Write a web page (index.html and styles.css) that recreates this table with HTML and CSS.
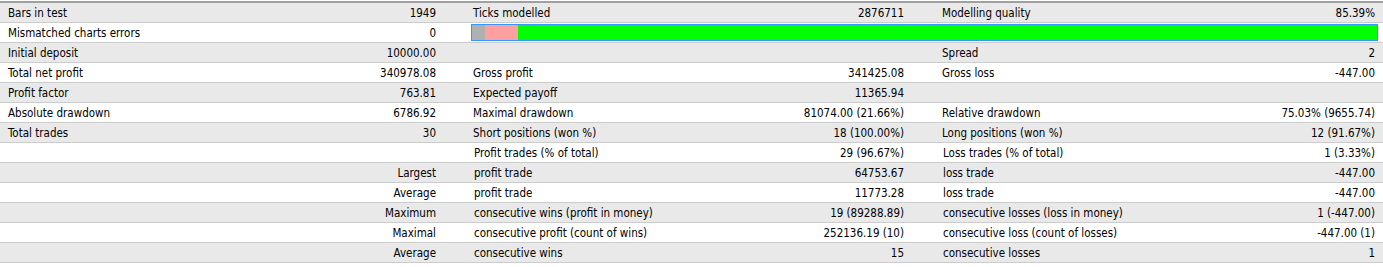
FILE: index.html
```html
<!DOCTYPE html>
<html>
<head>
<meta charset="utf-8">
<link rel="stylesheet" href="styles.css">
</head>
<body>
<div class="report">
  <div class="row alt">
    <div class="lbl">Bars in test</div><div class="val v1">1949</div>
    <div class="lbl">Ticks modelled</div><div class="val v2">2876711</div>
    <div class="lbl">Modelling quality</div><div class="val v3">85.39%</div>
  </div>
  <div class="row">
    <div class="lbl">Mismatched charts errors</div><div class="val v1">0</div>
    <div class="bar-cell">
      <div class="bar"><span class="seg seg-gray"></span><span class="seg seg-pink"></span><span class="seg seg-green"></span></div>
    </div>
  </div>
  <div class="row alt">
    <div class="lbl">Initial deposit</div><div class="val v1">10000.00</div>
    <div class="lbl"></div><div class="val v2"></div>
    <div class="lbl">Spread</div><div class="val v3">2</div>
  </div>
  <div class="row">
    <div class="lbl">Total net profit</div><div class="val v1">340978.08</div>
    <div class="lbl">Gross profit</div><div class="val v2">341425.08</div>
    <div class="lbl">Gross loss</div><div class="val v3">-447.00</div>
  </div>
  <div class="row alt">
    <div class="lbl">Profit factor</div><div class="val v1">763.81</div>
    <div class="lbl">Expected payoff</div><div class="val v2">11365.94</div>
    <div class="lbl"></div><div class="val v3"></div>
  </div>
  <div class="row">
    <div class="lbl">Absolute drawdown</div><div class="val v1">6786.92</div>
    <div class="lbl">Maximal drawdown</div><div class="val v2">81074.00 (21.66%)</div>
    <div class="lbl">Relative drawdown</div><div class="val v3">75.03% (9655.74)</div>
  </div>
  <div class="row alt">
    <div class="lbl">Total trades</div><div class="val v1">30</div>
    <div class="lbl">Short positions (won %)</div><div class="val v2">18 (100.00%)</div>
    <div class="lbl">Long positions (won %)</div><div class="val v3">12 (91.67%)</div>
  </div>
  <div class="row">
    <div class="wide"></div>
    <div class="lbl">Profit trades (% of total)</div><div class="val v2">29 (96.67%)</div>
    <div class="lbl">Loss trades (% of total)</div><div class="val v3">1 (3.33%)</div>
  </div>
  <div class="row alt">
    <div class="wide">Largest</div>
    <div class="lbl">profit trade</div><div class="val v2">64753.67</div>
    <div class="lbl">loss trade</div><div class="val v3">-447.00</div>
  </div>
  <div class="row">
    <div class="wide">Average</div>
    <div class="lbl">profit trade</div><div class="val v2">11773.28</div>
    <div class="lbl">loss trade</div><div class="val v3">-447.00</div>
  </div>
  <div class="row alt">
    <div class="wide">Maximum</div>
    <div class="lbl">consecutive wins (profit in money)</div><div class="val v2">19 (89288.89)</div>
    <div class="lbl">consecutive losses (loss in money)</div><div class="val v3">1 (-447.00)</div>
  </div>
  <div class="row">
    <div class="wide">Maximal</div>
    <div class="lbl">consecutive profit (count of wins)</div><div class="val v2">252136.19 (10)</div>
    <div class="lbl">consecutive loss (count of losses)</div><div class="val v3">-447.00 (1)</div>
  </div>
  <div class="row alt">
    <div class="wide">Average</div>
    <div class="lbl">consecutive wins</div><div class="val v2">15</div>
    <div class="lbl">consecutive losses</div><div class="val v3">1</div>
  </div>
</div>
</body>
</html>
```
FILE: styles.css
```css
html, body {
  margin: 0;
  padding: 0;
  background: #ffffff;
}

body {
  font-family: "DejaVu Sans Condensed", "Liberation Sans", sans-serif;
  font-size: 11.5px;
  color: #000000;
}

.report {
  padding-top: 1px;
}

.report::before {
  content: "";
  display: block;
  height: 2px;
  background: #a0a0a0;
}

.row {
  display: grid;
  grid-template-columns: 300px 166px 294px 175px 265px 183px;
  grid-template-rows: 19px;
  height: 19px;
  border-bottom: 1px solid #cccccc;
  background: #ffffff;
  white-space: nowrap;
  overflow: hidden;
}

.row.alt {
  background: #e9e9e9;
}

.lbl,
.val,
.wide {
  padding-top: 1px;
  line-height: 19px;
}

.lbl {
  padding-left: 8px;
  overflow: hidden;
}

.row > .lbl:nth-child(3),
.row > .lbl:nth-child(5) {
  padding-left: 7px;
}

.val {
  text-align: right;
}

.v1 {
  padding-right: 30px;
}

.v2 {
  padding-right: 31px;
}

.v3 {
  padding-right: 8px;
}

.wide {
  grid-column: 1 / span 2;
  text-align: right;
  padding-right: 30px;
}

.bar-cell {
  grid-column: 3 / span 4;
  padding: 1px 5px 1px 5px;
}

.bar {
  display: flex;
  box-sizing: border-box;
  height: 17px;
  border: 1px solid #3399ff;
}

.seg {
  display: block;
  height: 100%;
}

.seg-gray {
  width: 13px;
  background: #b0b0b0;
}

.seg-pink {
  width: 33px;
  background: #ffa0a0;
}

.seg-green {
  flex: 1;
  background: #00ff00;
}
```
